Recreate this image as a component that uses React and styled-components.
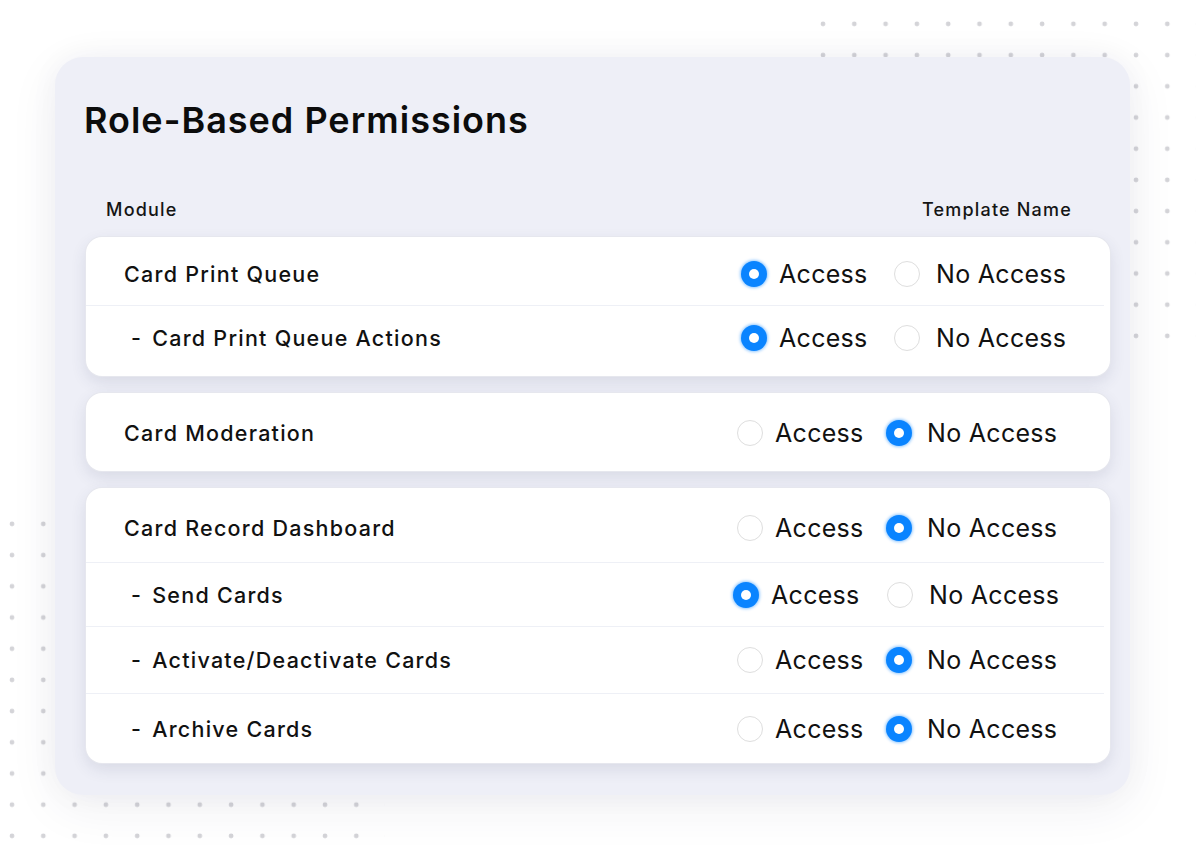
import React from 'react';
import styled, { createGlobalStyle } from 'styled-components';

const GlobalStyle = createGlobalStyle`
  html, body {
    margin: 0;
    padding: 0;
    background: #ffffff;
  }
  body {
    font-family: Inter, "Noto Sans", sans-serif;
    color: #111111;
  }
`;

const cards = [
  {
    pad: 7,
    rows: [
      { label: 'Card Print Queue', access: true, h: 68, top: 6, v: 'a' },
      { label: 'Card Print Queue Actions', sub: true, access: true, h: 64, v: 'a' },
    ],
  },
  {
    pad: 0,
    rows: [{ label: 'Card Moderation', access: false, h: 78, top: 2, v: 'b' }],
  },
  {
    pad: 0,
    rows: [
      { label: 'Card Record Dashboard', access: false, h: 74, top: 6, v: 'b' },
      { label: 'Send Cards', sub: true, access: true, h: 64, v: 'c' },
      { label: 'Activate/Deactivate Cards', sub: true, access: false, h: 67, v: 'b' },
      { label: 'Archive Cards', sub: true, access: false, h: 70, v: 'b' },
    ],
  },
];

// column sizes measured per row, relative to the card's left edge
const variants = {
  a: { start: 655, spread: 153, noGap: 16 },
  b: { start: 651, spread: 149, noGap: 15 },
  c: { start: 647, spread: 154, noGap: 16 },
};

const Dots = ({ id, cols, rows }) => (
  <svg width={cols * 31.3} height={rows * 31.2}>
    <defs>
      <pattern id={id} width="31.3" height="31.2" patternUnits="userSpaceOnUse">
        <circle cx="3" cy="3" r="2.4" fill="#d4d4d8" />
      </pattern>
    </defs>
    <rect width="100%" height="100%" fill={`url(#${id})`} />
  </svg>
);

const App = () => {
  return (
    <>
      <GlobalStyle />
      <Page>
        <DotField $left={820} $top={21}>
          <Dots id="dots-top" cols={12} rows={11} />
        </DotField>
        <DotField $left={9} $top={521}>
          <Dots id="dots-bottom" cols={12} rows={11} />
        </DotField>

        <Panel>
          <Title>Role-Based Permissions</Title>
          <HeaderRow>
            <span>Module</span>
            <span>Template Name</span>
          </HeaderRow>
          <CardList>
            {cards.map((card, ci) => (
              <Card key={ci} $pad={card.pad}>
                {card.rows.map((r, ri) => {
                  const v = variants[r.v];
                  return (
                    <Row key={ri} $h={r.h} $top={r.top || 0} $start={v.start} $spread={v.spread}>
                      <Label $sub={r.sub}>
                        {r.sub && <Dash>-</Dash>}
                        {r.label}
                      </Label>
                      <Option $gap={12}>
                        <Radio $on={r.access} />
                        <OptionText>Access</OptionText>
                      </Option>
                      <Option $gap={v.noGap}>
                        <Radio $on={!r.access} />
                        <OptionText>No Access</OptionText>
                      </Option>
                    </Row>
                  );
                })}
              </Card>
            ))}
          </CardList>
        </Panel>
      </Page>
    </>
  );
};

export default App;

const Page = styled.div`
  position: relative;
  width: 1200px;
  height: 863px;
  overflow: hidden;
  padding: 57px 0 0 55px;
  box-sizing: border-box;
`;

const DotField = styled.div`
  position: absolute;
  left: ${p => p.$left}px;
  top: ${p => p.$top}px;
  line-height: 0;
  z-index: 0;
`;

const Panel = styled.section`
  position: relative;
  z-index: 1;
  width: 1075px;
  height: 738px;
  box-sizing: border-box;
  padding: 41px 20px 32px 31px;
  background: #eeeff7;
  border-radius: 28px;
  box-shadow: 0 12px 50px rgba(40, 45, 80, 0.07), 0 0 30px rgba(40, 45, 80, 0.04);
  display: flex;
  flex-direction: column;
`;

const Title = styled.h1`
  margin: 0 0 0 -2px;
  font-family: Inter, "Noto Sans", sans-serif;
  font-size: 36px;
  line-height: 44px;
  font-weight: 600;
  letter-spacing: 1px;
  color: #0c0c0c;
`;

const HeaderRow = styled.div`
  display: flex;
  justify-content: space-between;
  margin-top: 58px;
  padding: 0 38px 0 20px;
  font-size: 18px;
  line-height: 20px;
  font-weight: 500;
  letter-spacing: 1.2px;
  color: #151515;
`;

const CardList = styled.div`
  display: flex;
  flex-direction: column;
  gap: 17px;
  margin-top: 17px;
`;

const Card = styled.div`
  background: #ffffff;
  border-radius: 16px;
  padding-bottom: ${p => p.$pad}px;
  box-shadow: 0 0 0 1px #e6e7ee, 0 6px 16px rgba(50, 55, 95, 0.12);
  overflow: hidden;

  & > div + div {
    border-top: 1.5px solid #eef0f6;
  }
`;

const Row = styled.div`
  display: grid;
  grid-template-columns: ${p => p.$start}px ${p => p.$spread}px 1fr;
  align-items: center;
  height: ${p => p.$h}px;
  padding-top: ${p => p.$top}px;
  box-sizing: border-box;
  margin-right: 6px;
`;

const Label = styled.div`
  padding-left: ${p => (p.$sub ? 45 : 38)}px;
  font-size: 21.5px;
  font-weight: 500;
  letter-spacing: 1.25px;
  color: #111111;
  display: flex;
  align-items: center;
`;

const Dash = styled.span`
  margin-right: 10px;
`;

const Option = styled.label`
  display: flex;
  align-items: center;
  gap: ${p => p.$gap}px;
  cursor: pointer;
`;

const Radio = styled.span`
  flex: none;
  width: 26px;
  height: 26px;
  border-radius: 50%;
  box-sizing: border-box;
  position: relative;
  background: ${p => (p.$on ? '#0a84ff' : '#ffffff')};
  border: ${p => (p.$on ? 'none' : '1.5px solid #dedede')};
  box-shadow: ${p => (p.$on ? '0 0 3px 1px rgba(10, 132, 255, 0.45)' : 'none')};

  &::after {
    content: '';
    display: ${p => (p.$on ? 'block' : 'none')};
    position: absolute;
    left: 8px;
    top: 8px;
    width: 10px;
    height: 10px;
    border-radius: 50%;
    background: #ffffff;
  }
`;

const OptionText = styled.span`
  font-family: Inter, "Liberation Sans", sans-serif;
  font-size: 25px;
  font-weight: 400;
  color: #111111;
  letter-spacing: 0.3px;
`;
